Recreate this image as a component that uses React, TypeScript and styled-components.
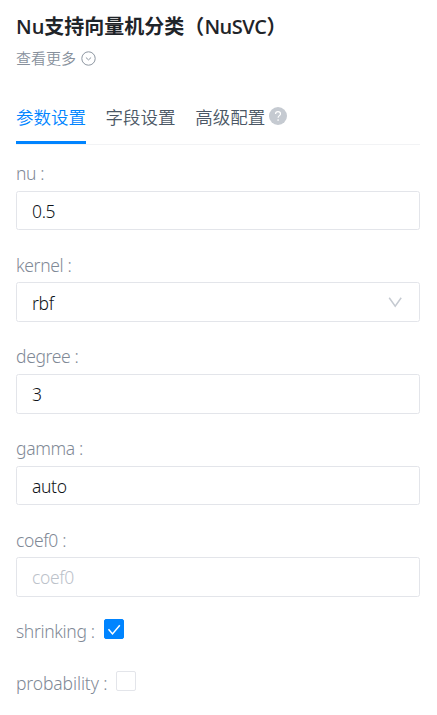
import React from 'react';
import styled, { createGlobalStyle } from 'styled-components';

const GlobalStyle = createGlobalStyle`
  * { box-sizing: border-box; }
  body {
    margin: 0;
    background: #fff;
    font-family: "Noto Sans", "Noto Sans CJK SC", sans-serif;
    font-size: 17.5px;
    font-weight: 350;
    letter-spacing: -0.35px;
  }
`;

const Panel = styled.main`
  width: 437px;
  height: 715px;
  padding: 12px 17px 0 16px;
  overflow: hidden;
`;

const Title = styled.h1`
  margin: 0;
  height: 32px;
  line-height: 30px;
  font-family: "Open Sans", "Noto Sans CJK SC", sans-serif;
  font-size: 20px;
  font-weight: 600;
  letter-spacing: 0;
  color: #1f2429;
  white-space: nowrap;
`;

const TitleCode = styled.span`
  letter-spacing: -0.5px;
`;

const More = styled.div`
  display: flex;
  align-items: center;
  gap: 5px;
  height: 27px;
  font-family: "Noto Sans CJK SC", sans-serif;
  font-size: 15px;
  letter-spacing: 0;
  color: #87909c;
`;

const Tabs = styled.nav`
  display: flex;
  gap: 19.6px;
  height: 56px;
  margin-top: 18px;
  letter-spacing: 0;
  box-shadow: inset 0 -1px #f2f3f5;
`;

const Tab = styled.div<{ $active?: boolean }>`
  display: flex;
  align-items: flex-start;
  gap: 3.5px;
  height: 55px;
  padding-top: 15px;
  line-height: 26px;
  font-family: "Noto Sans CJK SC", sans-serif;
  font-size: 17.5px;
  white-space: nowrap;
  color: ${p => (p.$active ? '#0084ff' : '#4b5765')};
  border-bottom: 3px solid ${p => (p.$active ? '#0084ff' : 'transparent')};
`;

const HelpIcon = styled.svg`
  margin-top: 3px;
`;

const Form = styled.form`
  padding-top: 13.4px;
`;

const Field = styled.div`
  height: 91.55px;
`;

const Label = styled.label<{ $spacing?: number }>`
  display: block;
  height: 32.5px;
  line-height: 31px;
  color: #7f8996;
  letter-spacing: ${p => p.$spacing ?? -0.35}px;
`;

const Control = styled.div<{ $placeholder?: boolean }>`
  display: flex;
  align-items: center;
  justify-content: space-between;
  height: 39.55px;
  padding: 1px 16px 0 15px;
  border: 1px solid #e3e5ea;
  border-radius: 2.5px;
  color: ${p => (p.$placeholder ? '#bcc2ca' : '#101419')};
`;

const CheckRow = styled.div`
  display: flex;
  align-items: flex-start;
  gap: 9px;
  height: 52px;
`;

const CheckBox = styled.span<{ $checked?: boolean }>`
  display: flex;
  width: 20px;
  height: 20px;
  margin-top: 3px;
  border: 1px solid ${p => (p.$checked ? '#0084ff' : '#e3e5ea')};
  border-radius: 2px;
  background: ${p => (p.$checked ? '#0084ff' : '#fff')};
`;

const fields = [
  { name: 'nu', value: '0.5' },
  { name: 'kernel', value: 'rbf', select: true },
  { name: 'degree', value: '3' },
  { name: 'gamma', value: 'auto' },
  { name: 'coef0', value: '' },
];

export default function App() {
  return (
    <>
      <GlobalStyle />
      <Panel>
        <Title>Nu支持向量机分类（<TitleCode>NuSVC</TitleCode>）</Title>
        <More>
          查看更多
          <svg width="16" height="16" viewBox="0 0 16 16" fill="none" stroke="#8d96a1">
            <circle cx="7.5" cy="8.5" r="6.7" />
            <path d="M4.9 7.5l2.6 2.4 2.6-2.4" />
          </svg>
        </More>
        <Tabs>
          <Tab $active>参数设置</Tab>
          <Tab>字段设置</Tab>
          <Tab>
            高级配置
            <HelpIcon width="18" height="18" viewBox="0 0 18 18" fill="none">
              <circle cx="9" cy="9" r="9" fill="#c5cad1" />
              <path d="M6.5 7.1c0-1.4 1-2.4 2.5-2.4s2.5.9 2.5 2.2c0 1.8-2.4 1.7-2.4 3.9" stroke="#fff" strokeWidth="1.2" />
              <circle cx="9.1" cy="13" r=".85" fill="#fff" />
            </HelpIcon>
          </Tab>
        </Tabs>
        <Form>
          {fields.map(f => (
            <Field key={f.name}>
              <Label>{f.name} :</Label>
              <Control $placeholder={!f.value}>
                {f.value || f.name}
                {f.select && (
                  <svg width="16" height="14" viewBox="0 0 16 14" fill="none" stroke="#c5cad1" strokeWidth="1.5">
                    <path d="M2.2 1.8l6 8.3 6-8.3" />
                  </svg>
                )}
              </Control>
            </Field>
          ))}
          <CheckRow>
            <Label>shrinking :</Label>
            <CheckBox $checked>
              <svg width="18" height="18" viewBox="0 0 18 18" fill="none" stroke="#fff" strokeWidth="1.5">
                <path d="M3.5 9.2l4 4.7 7.3-8.6" />
              </svg>
            </CheckBox>
          </CheckRow>
          <CheckRow>
            <Label $spacing={-0.12}>probability :</Label>
            <CheckBox />
          </CheckRow>
        </Form>
      </Panel>
    </>
  );
}
